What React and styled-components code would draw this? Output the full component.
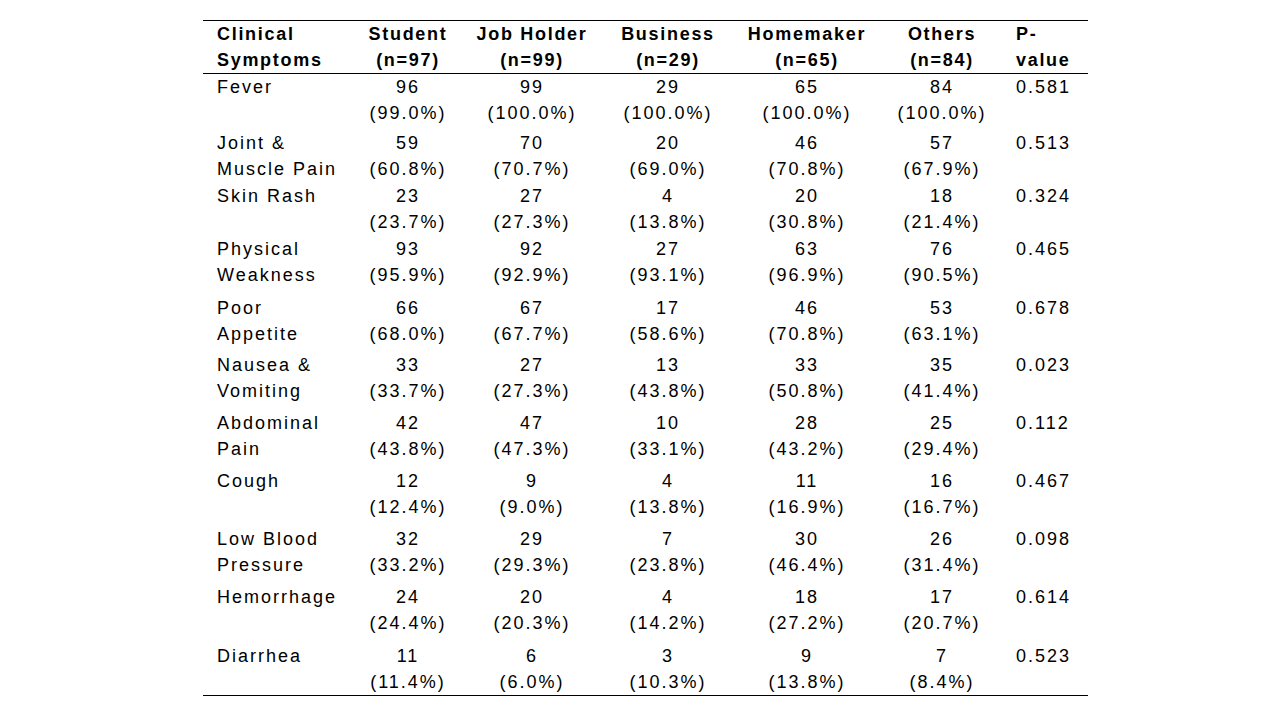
import React from 'react';
import styled, { createGlobalStyle } from 'styled-components';

const GlobalStyle = createGlobalStyle`
  html, body {
    margin: 0;
    padding: 0;
    background: #ffffff;
  }
  body {
    font-family: "Liberation Sans", Arial, sans-serif;
    color: #000;
  }
`;

const Page = styled.div`
  width: 1280px;
  height: 720px;
  display: flex;
  align-items: flex-start;
  padding: 20px 0 0 203px;
  box-sizing: border-box;
`;

const Table = styled.div`
  width: 885px;
  border-top: 1px solid #000;
  border-bottom: 1px solid #000;
  font-size: 18px;
  line-height: 26px;
  letter-spacing: 2px;
`;

const Row = styled.div`
  display: grid;
  grid-template-columns: 143px 124px 124px 148px 130px 140px 76px;
  height: ${({ h }) => h}px;
  ${({ head }) => head && `
    font-weight: bold;
    letter-spacing: 1.7px;
    border-bottom: 1px solid #000;
  `}
`;

const Cell = styled.div`
  text-align: ${({ align }) => align || 'center'};
  padding-left: ${({ pl }) => pl || 0}px;
  white-space: nowrap;
`;

const Line = styled.div``;

const cols = [
  ['Student', '(n=97)'],
  ['Job Holder', '(n=99)'],
  ['Business', '(n=29)'],
  ['Homemaker', '(n=65)'],
  ['Others', '(n=84)'],
];

const rows = [
  { name: ['Fever'], h: 56, v: [['96', '(99.0%)'], ['99', '(100.0%)'], ['29', '(100.0%)'], ['65', '(100.0%)'], ['84', '(100.0%)']], p: '0.581' },
  { name: ['Joint &', 'Muscle Pain'], h: 53, v: [['59', '(60.8%)'], ['70', '(70.7%)'], ['20', '(69.0%)'], ['46', '(70.8%)'], ['57', '(67.9%)']], p: '0.513' },
  { name: ['Skin Rash'], h: 53, v: [['23', '(23.7%)'], ['27', '(27.3%)'], ['4', '(13.8%)'], ['20', '(30.8%)'], ['18', '(21.4%)']], p: '0.324' },
  { name: ['Physical', 'Weakness'], h: 59, v: [['93', '(95.9%)'], ['92', '(92.9%)'], ['27', '(93.1%)'], ['63', '(96.9%)'], ['76', '(90.5%)']], p: '0.465' },
  { name: ['Poor', 'Appetite'], h: 57, v: [['66', '(68.0%)'], ['67', '(67.7%)'], ['17', '(58.6%)'], ['46', '(70.8%)'], ['53', '(63.1%)']], p: '0.678' },
  { name: ['Nausea &', 'Vomiting'], h: 58, v: [['33', '(33.7%)'], ['27', '(27.3%)'], ['13', '(43.8%)'], ['33', '(50.8%)'], ['35', '(41.4%)']], p: '0.023' },
  { name: ['Abdominal', 'Pain'], h: 58, v: [['42', '(43.8%)'], ['47', '(47.3%)'], ['10', '(33.1%)'], ['28', '(43.2%)'], ['25', '(29.4%)']], p: '0.112' },
  { name: ['Cough'], h: 58, v: [['12', '(12.4%)'], ['9', '(9.0%)'], ['4', '(13.8%)'], ['11', '(16.9%)'], ['16', '(16.7%)']], p: '0.467' },
  { name: ['Low Blood', 'Pressure'], h: 58, v: [['32', '(33.2%)'], ['29', '(29.3%)'], ['7', '(23.8%)'], ['30', '(46.4%)'], ['26', '(31.4%)']], p: '0.098' },
  { name: ['Hemorrhage'], h: 59, v: [['24', '(24.4%)'], ['20', '(20.3%)'], ['4', '(14.2%)'], ['18', '(27.2%)'], ['17', '(20.7%)']], p: '0.614' },
  { name: ['Diarrhea'], h: 52, v: [['11', '(11.4%)'], ['6', '(6.0%)'], ['3', '(10.3%)'], ['9', '(13.8%)'], ['7', '(8.4%)']], p: '0.523' },
];

function Lines({ items }) {
  return items.map((t, i) => <Line key={i}>{t}</Line>);
}

export default function App() {
  return (
    <Page>
      <GlobalStyle />
      <Table>
        <Row head h={52}>
          <Cell align="left" pl={14}>
            <Lines items={['Clinical', 'Symptoms']} />
          </Cell>
          {cols.map((c, i) => (
            <Cell key={i}>
              <Lines items={c} />
            </Cell>
          ))}
          <Cell align="left" pl={4}>
            <Lines items={['P-', 'value']} />
          </Cell>
        </Row>
        {rows.map((r, i) => (
          <Row key={i} h={r.h}>
            <Cell align="left" pl={14}>
              <Lines items={r.name} />
            </Cell>
            {r.v.map((v, j) => (
              <Cell key={j}>
                <Lines items={v} />
              </Cell>
            ))}
            <Cell align="left" pl={4}>
              {r.p}
            </Cell>
          </Row>
        ))}
      </Table>
    </Page>
  );
}
